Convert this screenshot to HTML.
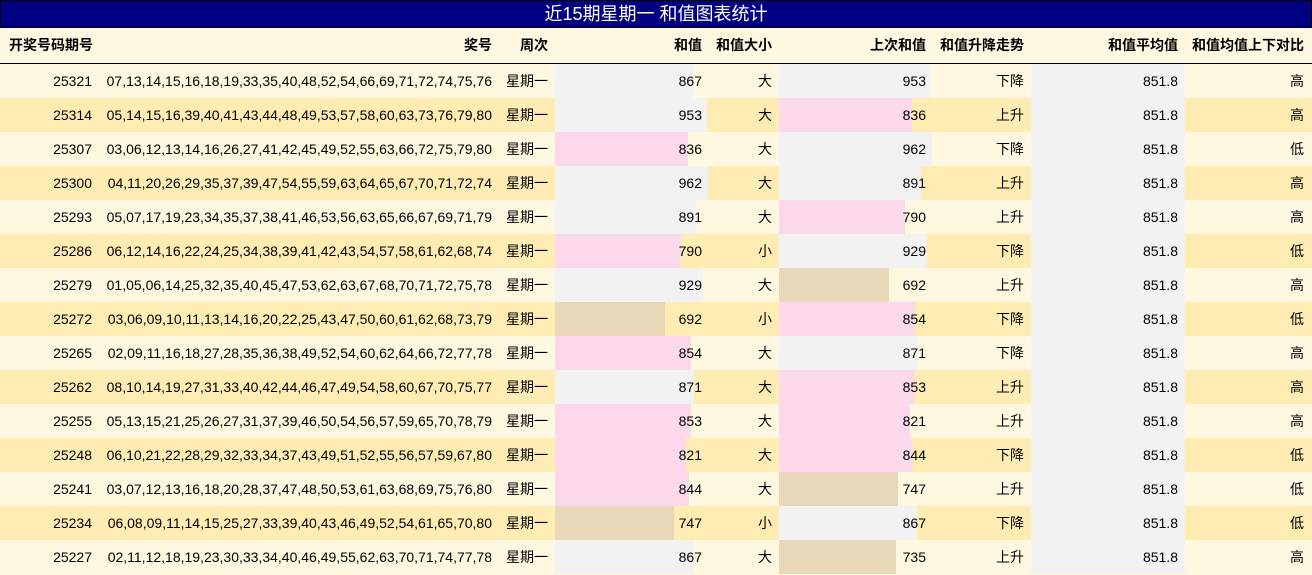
<!DOCTYPE html>
<html><head><meta charset="utf-8"><style>
*{margin:0;padding:0;box-sizing:border-box}
body{width:1312px;height:575px;background:#fff8e1;font-family:"Liberation Sans","Noto Sans CJK SC",sans-serif;font-size:14px;color:#000;overflow:hidden}
.title{height:28px;background:#000080;border:1px solid #000;color:#fff;font-size:18px;text-align:center;line-height:26px}
.hdr{height:36px;border-bottom:1px solid #000;display:flex;font-weight:bold;background:#fff8e1}
.row{height:34px;display:flex}
.row.l{background:#fff8e1}.row.d{background:#ffecb3}
.c{position:relative;text-align:right;line-height:34px;white-space:nowrap}
.hdr .c{line-height:35px}
.c span{position:relative}
.bar{position:absolute;left:0;top:0;bottom:0}
.g{background:#f2f2f2}.p{background:#fcd9ea}.t{background:#e8d7b9}
.w1{width:100px;padding-right:8px}.w2{width:400px;padding-right:8px}.w3{width:55px;padding-right:7px}
.w4{width:153px;padding-right:6px}.w5{width:71px;padding-right:7px}.w6{width:153px;padding-right:6px}
.w7{width:99px;padding-right:7px}.w8{width:154px;padding-right:7px}.w9{width:127px;padding-right:8px}
.hdr .w1{text-align:left;padding-left:9px}
</style></head><body>
<div class="title">近15期星期一 和值图表统计</div>
<div class="hdr"><div class="c w1">开奖号码期号</div><div class="c w2">奖号</div><div class="c w3">周次</div><div class="c w4">和值</div><div class="c w5">和值大小</div><div class="c w6">上次和值</div><div class="c w7">和值升降走势</div><div class="c w8">和值平均值</div><div class="c w9">和值均值上下对比</div></div>
<div id="rows"></div>
<script>
var d=[["25321","07,13,14,15,16,18,19,33,35,40,48,52,54,66,69,71,72,74,75,76",867,"大",953,"下降","高"],
["25314","05,14,15,16,39,40,41,43,44,48,49,53,57,58,60,63,73,76,79,80",953,"大",836,"上升","高"],
["25307","03,06,12,13,14,16,26,27,41,42,45,49,52,55,63,66,72,75,79,80",836,"大",962,"下降","低"],
["25300","04,11,20,26,29,35,37,39,47,54,55,59,63,64,65,67,70,71,72,74",962,"大",891,"上升","高"],
["25293","05,07,17,19,23,34,35,37,38,41,46,53,56,63,65,66,67,69,71,79",891,"大",790,"上升","高"],
["25286","06,12,14,16,22,24,25,34,38,39,41,42,43,54,57,58,61,62,68,74",790,"小",929,"下降","低"],
["25279","01,05,06,14,25,32,35,40,45,47,53,62,63,67,68,70,71,72,75,78",929,"大",692,"上升","高"],
["25272","03,06,09,10,11,13,14,16,20,22,25,43,47,50,60,61,62,68,73,79",692,"小",854,"下降","低"],
["25265","02,09,11,16,18,27,28,35,36,38,49,52,54,60,62,64,66,72,77,78",854,"大",871,"下降","高"],
["25262","08,10,14,19,27,31,33,40,42,44,46,47,49,54,58,60,67,70,75,77",871,"大",853,"上升","高"],
["25255","05,13,15,21,25,26,27,31,37,39,46,50,54,56,57,59,65,70,78,79",853,"大",821,"上升","高"],
["25248","06,10,21,22,28,29,32,33,34,37,43,49,51,52,55,56,57,59,67,80",821,"大",844,"下降","低"],
["25241","03,07,12,13,16,18,20,28,37,47,48,50,53,61,63,68,69,75,76,80",844,"大",747,"上升","低"],
["25234","06,08,09,11,14,15,25,27,33,39,40,43,46,49,52,54,61,65,70,80",747,"小",867,"下降","低"],
["25227","02,11,12,18,19,23,30,33,34,40,46,49,55,62,63,70,71,74,77,78",867,"大",735,"上升","高"]];
function cls(v){return v>=860?"g":(v>=780?"p":"t")}
function bar(v){return '<div class="bar '+cls(v)+'" style="width:'+Math.round(v/962*153)+'px"></div><span>'+v+'</span>'}
var h="";d.forEach(function(r,i){h+='<div class="row '+(i%2?'d':'l')+'"><div class="c w1">'+r[0]+'</div><div class="c w2">'+r[1]+'</div><div class="c w3">星期一</div><div class="c w4">'+bar(r[2])+'</div><div class="c w5">'+r[3]+'</div><div class="c w6">'+bar(r[4])+'</div><div class="c w7">'+r[5]+'</div><div class="c w8"><div class="bar g" style="width:154px"></div><span>851.8</span></div><div class="c w9">'+r[6]+'</div></div>'});
document.getElementById("rows").innerHTML=h;
</script>
</body></html>
